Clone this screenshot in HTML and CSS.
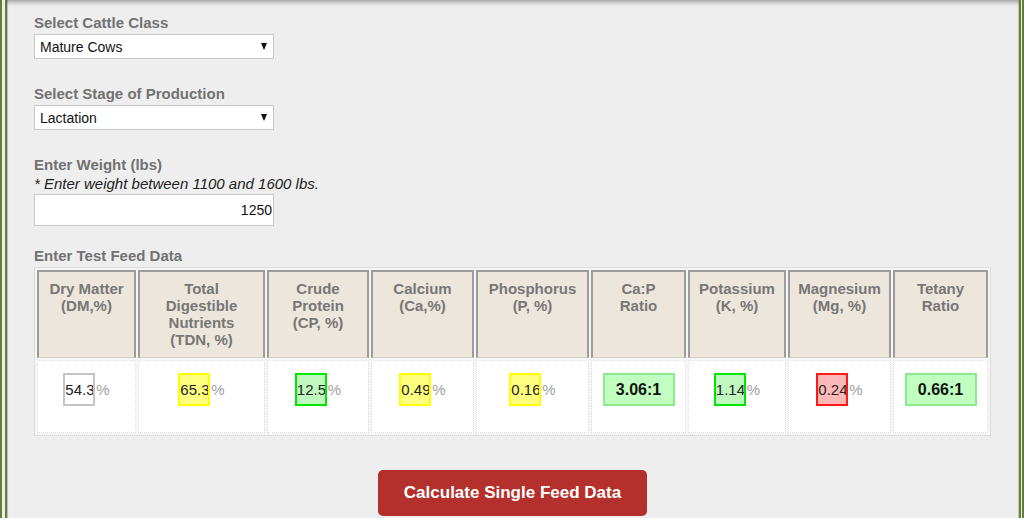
FILE: index.html
```html
<!DOCTYPE html>
<html lang="en">
<head>
<meta charset="utf-8">
<title>Single Feed Calculator</title>
<link rel="stylesheet" href="styles.css">
</head>
<body>
<div class="frame">
  <form class="calc">
    <div class="field">
      <label class="field-label" for="cattle-class">Select Cattle Class</label>
      <div class="select-wrap">
        <select id="cattle-class" class="select">
          <option>Mature Cows</option>
        </select>
        <span class="select-arrow"></span>
      </div>
    </div>

    <div class="field">
      <label class="field-label" for="stage">Select Stage of Production</label>
      <div class="select-wrap">
        <select id="stage" class="select">
          <option>Lactation</option>
        </select>
        <span class="select-arrow"></span>
      </div>
    </div>

    <div class="field">
      <label class="field-label" for="weight">Enter Weight (lbs)</label>
      <p class="field-note">* Enter weight between 1100 and 1600 lbs.</p>
      <input id="weight" class="weight-input" type="text" value="1250">
    </div>

    <div class="field field-feed">
      <span class="field-label">Enter Test Feed Data</span>
      <div class="feed-grid">
        <div class="feed-head">Dry Matter<br>(DM,%)</div>
        <div class="feed-head">Total<br>Digestible<br>Nutrients<br>(TDN, %)</div>
        <div class="feed-head">Crude<br>Protein<br>(CP, %)</div>
        <div class="feed-head">Calcium<br>(Ca,%)</div>
        <div class="feed-head">Phosphorus<br>(P, %)</div>
        <div class="feed-head">Ca:P<br>Ratio</div>
        <div class="feed-head">Potassium<br>(K, %)</div>
        <div class="feed-head">Magnesium<br>(Mg, %)</div>
        <div class="feed-head">Tetany<br>Ratio</div>

        <div class="feed-cell"><input class="val" type="text" value="54.34"><span class="unit">%</span></div>
        <div class="feed-cell"><input class="val val-warn" type="text" value="65.3"><span class="unit">%</span></div>
        <div class="feed-cell"><input class="val val-ok" type="text" value="12.5"><span class="unit">%</span></div>
        <div class="feed-cell"><input class="val val-warn" type="text" value="0.49"><span class="unit">%</span></div>
        <div class="feed-cell"><input class="val val-warn" type="text" value="0.16"><span class="unit">%</span></div>
        <div class="feed-cell"><span class="ratio">3.06:1</span></div>
        <div class="feed-cell"><input class="val val-ok" type="text" value="1.14"><span class="unit">%</span></div>
        <div class="feed-cell"><input class="val val-bad" type="text" value="0.24"><span class="unit">%</span></div>
        <div class="feed-cell"><span class="ratio">0.66:1</span></div>
      </div>
    </div>

    <div class="actions">
      <button type="button" class="btn-calc">Calculate Single Feed Data</button>
    </div>
  </form>
</div>
</body>
</html>
```

FILE: styles.css
```css
html, body {
  margin: 0;
  padding: 0;
  background: #eeeeee;
}

body {
  font-family: "Liberation Sans", Arial, sans-serif;
  font-size: 15px;
  color: #222;
}

/* page panel with the olive side rails and a soft top shadow */
.frame {
  box-sizing: border-box;
  height: 518px;
  overflow: hidden;
  background: #eeeeee;
  border-left: 7px double #617e36;
  border-right: 5px double #617e36;
  padding: 14px 28px 0 27px;
  box-shadow: inset 0 5px 5px -3px rgba(0, 0, 0, 0.35), inset 1px 0 0 #c4c4c4, inset -1px 0 0 #d0d0d0;
}

.calc {
  width: 957px;
}

.field {
  display: flex;
  flex-direction: column;
  align-items: flex-start;
  margin-bottom: 26px;
}

.field-label {
  display: block;
  font-weight: bold;
  font-size: 15px;
  line-height: 17px;
  color: #727272;
  margin-bottom: 3px;
}

.field-note {
  margin: -1px 0 2px;
  font-style: italic;
  font-size: 15px;
  line-height: 17px;
  color: #222;
}

/* dropdowns */
.select-wrap {
  position: relative;
  width: 240px;
  height: 25px;
}

.select {
  appearance: none;
  -webkit-appearance: none;
  box-sizing: border-box;
  width: 100%;
  height: 100%;
  margin: 0;
  padding: 0 20px 0 5px;
  border: 1px solid #c8c8c8;
  border-radius: 0;
  background: #fff;
  font: 14px "Liberation Sans", Arial, sans-serif;
  color: #111;
}

.select-arrow {
  position: absolute;
  right: 7px;
  top: 9px;
  width: 0;
  height: 0;
  border-left: 3.5px solid transparent;
  border-right: 3.5px solid transparent;
  border-top: 7px solid #111;
  pointer-events: none;
}

/* weight input */
.weight-input {
  box-sizing: border-box;
  width: 240px;
  height: 32px;
  margin: 0;
  padding: 0 1px 0 4px;
  border: 1px solid #c8c8c8;
  background: #fff;
  text-align: right;
  font: 14px "Liberation Sans", Arial, sans-serif;
  color: #111;
}

.field-feed {
  margin-top: -5px;
  margin-bottom: 34px;
}

/* feed data table */
.feed-grid {
  display: grid;
  grid-template-columns: 99px 127px 102px 103px 113px 95px 98px 103px 95px;
  grid-template-rows: 88px 73px;
  gap: 2px;
  padding: 2px;
  border: 1px solid #dcdcdc;
  background: #f6f6f6;
}

.feed-head {
  box-sizing: border-box;
  padding-top: 8px;
  background: #ede6dc;
  border: 2px solid #9c9c9c;
  border-bottom: 1px solid #d3cec6;
  text-align: center;
  font-weight: bold;
  font-size: 15px;
  line-height: 17px;
  color: #777;
}

.feed-cell {
  box-sizing: border-box;
  padding-top: 12px;
  background: #fff;
  border: 1px dotted #dedede;
  text-align: center;
  white-space: nowrap;
}

.val {
  box-sizing: border-box;
  width: 32px;
  height: 33px;
  margin: 0;
  padding: 0;
  vertical-align: top;
  border: 2px solid #c4c4c4;
  background: #fff;
  font: 15px "Liberation Sans", Arial, sans-serif;
  color: #222;
}

.val-warn {
  border-color: #ffff00;
  background: #ffff80;
}

.val-ok {
  border-color: #00e600;
  background: #c0f8c0;
}

.val-bad {
  border-color: #ff1a1a;
  background: #ffb8b8;
}

.unit {
  display: inline-block;
  margin-left: 1px;
  line-height: 33px;
  vertical-align: top;
  color: #a0a0a0;
}

.ratio {
  display: inline-block;
  box-sizing: border-box;
  width: 72px;
  height: 33px;
  line-height: 29px;
  border: 2px solid #8eea8e;
  background: #c0ffc0;
  font-weight: bold;
  font-size: 16px;
  color: #111;
}

/* submit */
.actions {
  display: flex;
  justify-content: center;
}

.btn-calc {
  height: 46px;
  padding: 0 26px;
  border: none;
  border-radius: 5px;
  background: #b3302c;
  color: #fff;
  font: bold 17px "Liberation Sans", Arial, sans-serif;
  cursor: pointer;
}
```
